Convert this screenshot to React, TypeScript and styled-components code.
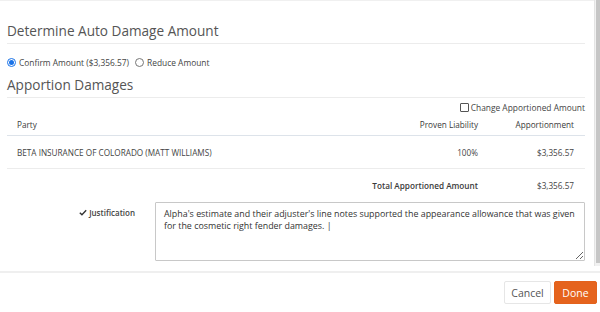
import React from 'react';
import styled, { createGlobalStyle } from 'styled-components';

const GlobalStyle = createGlobalStyle`
  html, body {
    margin: 0;
    padding: 0;
    background: #fff;
  }
  body {
    font-family: 'Open Sans', 'Noto Sans', sans-serif;
    color: #444;
  }
`;

const Modal = styled.div`
  width: 600px;
  height: 312px;
  display: flex;
  flex-direction: column;
  background: #fff;
`;

const Body = styled.div`
  height: 266px;
  display: flex;
  overflow: hidden;
`;

const Content = styled.div`
  flex: 1;
  padding: 20px 9px 0 7px;
  border-top: 1px solid #f0f0f0;
`;

const ScrollTrack = styled.div`
  width: 6px;
  box-sizing: border-box;
  background: #f1f1f1;
  border-left: 1px solid #e4e4e4;
  display: flex;
  justify-content: flex-end;
`;

const ScrollThumb = styled.div`
  width: 4px;
  height: 263px;
  background: #c6c6c6;
`;

const SectionTitle = styled.h2<{ $top?: number }>`
  margin: ${({ $top }) => $top ?? 0}px 0 0;
  padding: 0 0 2px;
  font-size: 13.6px;
  font-weight: 400;
  line-height: 20px;
  color: #555;
  border-bottom: 1px solid #ececec;
`;

const RadioRow = styled.div`
  display: flex;
  align-items: center;
  gap: 6px;
  height: 16px;
  margin-top: 10px;
  font-size: 8.4px;
  color: #444;
`;

const RadioOption = styled.label`
  display: flex;
  align-items: center;
  gap: 3px;
`;

const RadioDot = styled.span<{ $checked?: boolean }>`
  width: 9px;
  height: 9px;
  box-sizing: border-box;
  border-radius: 50%;
  border: 1px solid ${({ $checked }) => ($checked ? '#1a73e8' : '#767676')};
  display: flex;
  align-items: center;
  justify-content: center;

  &::after {
    content: '';
    width: 5px;
    height: 5px;
    border-radius: 50%;
    background: ${({ $checked }) => ($checked ? '#1a73e8' : 'transparent')};
  }
`;

const CheckRow = styled.div`
  display: flex;
  justify-content: flex-end;
  align-items: center;
  gap: 2px;
  height: 12px;
  margin-top: 3px;
  font-size: 8.4px;
  color: #444;
`;

const CheckBox = styled.span`
  width: 9px;
  height: 9px;
  box-sizing: border-box;
  border: 1px solid #555;
  border-radius: 1px;
`;

const Table = styled.div`
  display: grid;
  grid-template-columns: 1fr 120px 96px;
  font-size: 8.2px;
  color: #444;
`;

const Cell = styled.div<{ $align?: 'left' | 'right'; $bold?: boolean; $head?: boolean; $border?: string }>`
  display: flex;
  align-items: center;
  justify-content: ${({ $align }) => ($align === 'right' ? 'flex-end' : 'flex-start')};
  padding: ${({ $align }) => ($align === 'right' ? '0 11px 0 0' : '0 0 0 10px')};
  font-weight: ${({ $bold }) => ($bold ? 600 : 400)};
  color: ${({ $head, $bold }) => ($head || $bold ? '#3a3a3a' : '#444')};
  border-bottom: ${({ $border }) => $border ?? 'none'};
`;

const HeadRow = styled.div`
  display: contents;
  & > div {
    height: 22px;
  }
`;

const BodyRow = styled.div`
  display: contents;
  & > div {
    height: 32px;
  }
`;

const TotalRow = styled.div`
  display: contents;
  & > div {
    height: 33px;
  }
`;

const JustRow = styled.div`
  display: flex;
  align-items: flex-start;
`;

const JustLabel = styled.div`
  width: 148px;
  display: flex;
  justify-content: flex-end;
  align-items: center;
  gap: 2px;
  padding: 5px 20px 0 0;
  box-sizing: border-box;
  font-size: 8px;
  font-weight: 600;
  color: #444;
`;

const TextArea = styled.textarea`
  flex: 1;
  height: 59px;
  box-sizing: border-box;
  margin: 0;
  padding: 5px 8px;
  border: 1px solid #c8c8c8;
  border-radius: 1px;
  font-family: 'Open Sans', sans-serif;
  font-size: 8.9px;
  line-height: 12px;
  color: #333;
  resize: vertical;
  outline: none;
`;

const Footer = styled.div`
  flex: 1;
  display: flex;
  justify-content: flex-end;
  align-items: center;
  gap: 3px;
  padding: 0 3px 0 0;
  border-top: 2px solid #efefef;
  margin-top: 5px;
`;

const Button = styled.button<{ $primary?: boolean }>`
  height: 23px;
  width: ${({ $primary }) => ($primary ? '43px' : '47px')};
  padding: 0;
  font-family: 'Open Sans', sans-serif;
  font-size: 10.5px;
  border-radius: 2px;
  cursor: pointer;
  border: 1px solid ${({ $primary }) => ($primary ? '#e3621c' : '#e6e6e6')};
  background: ${({ $primary }) => ($primary ? '#e5631d' : '#fff')};
  color: ${({ $primary }) => ($primary ? '#fff' : '#555')};
`;

const Check = () => (
  <svg width="8" height="7" viewBox="0 0 10 8">
    <path d="M1 4.2 L3.7 6.8 L9 1.2" fill="none" stroke="#333" strokeWidth="1.7" />
  </svg>
);

const App: React.FC = () => {
  const headBorder = '1px solid #dde3ea';
  const rowBorder = '1px solid #ececec';

  return (
    <>
      <GlobalStyle />
      <Modal>
        <Body>
          <Content>
            <SectionTitle>Determine Auto Damage Amount</SectionTitle>
            <RadioRow>
              <RadioOption>
                <RadioDot $checked />
                Confirm Amount ($3,356.57)
              </RadioOption>
              <RadioOption>
                <RadioDot />
                Reduce Amount
              </RadioOption>
            </RadioRow>
            <SectionTitle $top={5}>Apportion Damages</SectionTitle>
            <CheckRow>
              <CheckBox />
              Change Apportioned Amount
            </CheckRow>
            <Table>
              <HeadRow>
                <Cell $head $border={headBorder}>Party</Cell>
                <Cell $head $align="right" $border={headBorder}>Proven Liability</Cell>
                <Cell $head $align="right" $border={headBorder}>Apportionment</Cell>
              </HeadRow>
              <BodyRow>
                <Cell $border={rowBorder}>BETA INSURANCE OF COLORADO (MATT WILLIAMS)</Cell>
                <Cell $align="right" $border={rowBorder}>100%</Cell>
                <Cell $align="right" $border={rowBorder}>$3,356.57</Cell>
              </BodyRow>
              <TotalRow>
                <Cell />
                <Cell $bold $align="right">Total Apportioned Amount</Cell>
                <Cell $align="right">$3,356.57</Cell>
              </TotalRow>
            </Table>
            <JustRow>
              <JustLabel>
                <Check />
                Justification
              </JustLabel>
              <TextArea
                defaultValue="Alpha's estimate and their adjuster's line notes supported the appearance allowance that was given for the cosmetic right fender damages. |"
              />
            </JustRow>
          </Content>
          <ScrollTrack>
            <ScrollThumb />
          </ScrollTrack>
        </Body>
        <Footer>
          <Button>Cancel</Button>
          <Button $primary>Done</Button>
        </Footer>
      </Modal>
    </>
  );
};

export default App;
